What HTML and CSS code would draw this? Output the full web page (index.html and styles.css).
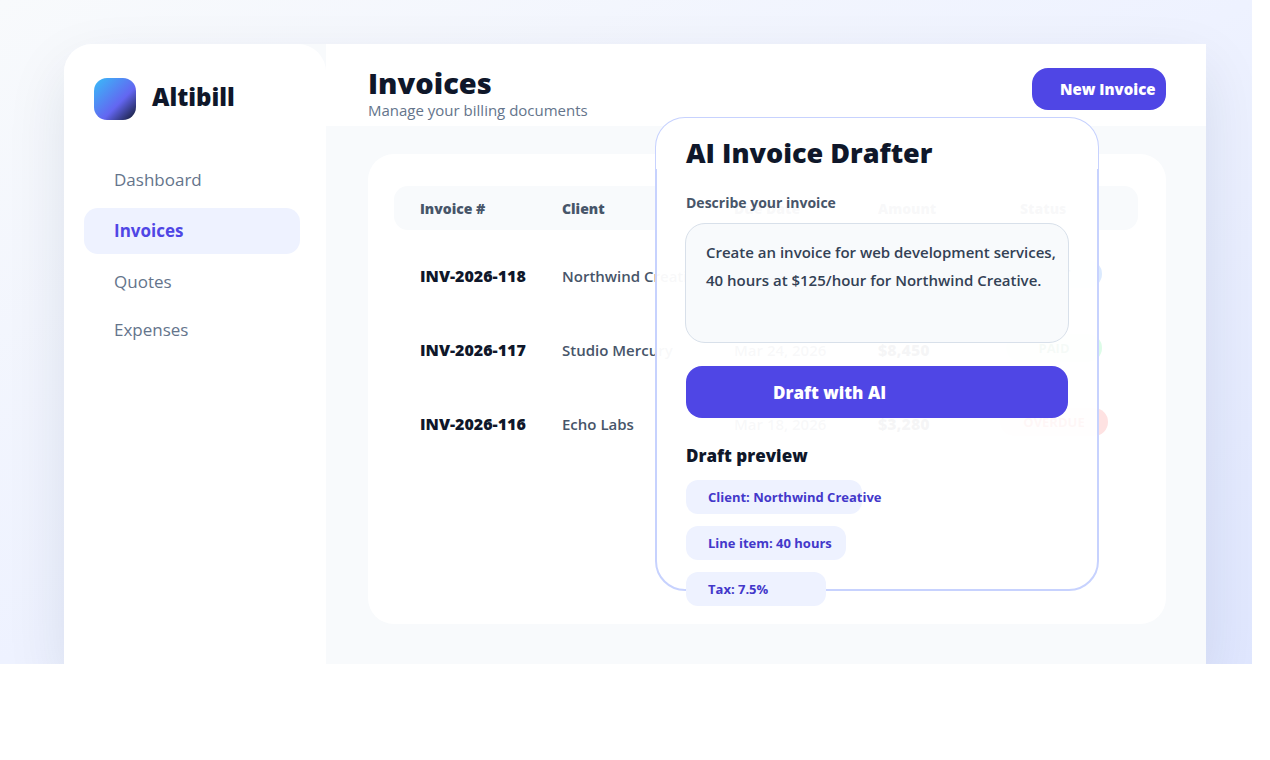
FILE: index.html
```html
<!DOCTYPE html>
<html lang="en">
<head>
    <meta charset="UTF-8">
    <meta name="viewport" content="width=device-width, initial-scale=1.0">
    <title>Altibill - Invoices</title>
    <link rel="stylesheet" href="styles.css">
</head>
<body>
    <div class="scene">
        <div class="app">
            <aside class="sidebar">
                <div class="brand">
                    <span class="brand-mark"></span>
                    <span class="brand-name">Altibill</span>
                </div>
                <nav class="nav">
                    <a class="nav-item" href="#dashboard">Dashboard</a>
                    <a class="nav-item active" href="#invoices">Invoices</a>
                    <a class="nav-item" href="#quotes">Quotes</a>
                    <a class="nav-item" href="#expenses">Expenses</a>
                </nav>
            </aside>

            <main class="main">
                <header class="topbar">
                    <div>
                        <h1 class="page-title">Invoices</h1>
                        <p class="page-subtitle">Manage your billing documents</p>
                    </div>
                    <button class="new-btn" type="button">New Invoice</button>
                </header>

                <section class="card">
                    <table class="invoices">
                        <thead>
                            <tr>
                                <th class="col-number">Invoice #</th>
                                <th class="col-client">Client</th>
                                <th class="col-date">Due Date</th>
                                <th class="col-amount">Amount</th>
                                <th>Status</th>
                            </tr>
                        </thead>
                        <tbody>
                            <tr>
                                <td class="number">INV-2026-118</td>
                                <td>Northwind Creative</td>
                                <td>Mar 28, 2026</td>
                                <td class="amount">$5,000</td>
                                <td class="status"><span class="pill sent">SENT</span></td>
                            </tr>
                            <tr>
                                <td class="number">INV-2026-117</td>
                                <td>Studio Mercury</td>
                                <td>Mar 24, 2026</td>
                                <td class="amount">$8,450</td>
                                <td class="status"><span class="pill paid">PAID</span></td>
                            </tr>
                            <tr>
                                <td class="number">INV-2026-116</td>
                                <td>Echo Labs</td>
                                <td>Mar 18, 2026</td>
                                <td class="amount">$3,280</td>
                                <td class="status"><span class="pill overdue">OVERDUE</span></td>
                            </tr>
                        </tbody>
                    </table>
                </section>
            </main>

            <!-- AI drafter floats over the invoice list -->
            <section class="drafter">
                <h2 class="drafter-title">AI Invoice Drafter</h2>
                <div class="drafter-body">
                    <label class="field-label" for="prompt">Describe your invoice</label>
                    <textarea class="prompt" id="prompt" spellcheck="false">Create an invoice for web development services,
40 hours at $125/hour for Northwind Creative.</textarea>
                    <button class="draft-btn" type="button">Draft with AI</button>
                    <h3 class="preview-title">Draft preview</h3>
                    <ul class="chips">
                        <li class="chip chip-client">Client: Northwind Creative</li>
                        <li class="chip chip-line">Line item: 40 hours</li>
                        <li class="chip chip-tax">Tax: 7.5%</li>
                    </ul>
                </div>
            </section>
        </div>
    </div>
</body>
</html>
```
FILE: styles.css
```css
* {
    margin: 0;
    padding: 0;
    box-sizing: border-box;
}

body {
    font-family: 'Open Sans', 'Noto Sans', sans-serif;
    background: #ffffff;
    color: #0f172a;
}

button,
textarea {
    font-family: inherit;
}

.scene {
    display: flex;
    height: calc(100vh - 96px);
    min-height: 620px;
    margin-right: 18px;
    padding: 44px 46px 0 64px;
    background: linear-gradient(to bottom right, #f8fafc 0%, #eef2ff 50%, #e0e7ff 100%);
    overflow: hidden;
}

.app {
    position: relative;
    display: flex;
    flex: 1;
    background: #f8fafc;
    border-top-left-radius: 28px;
    box-shadow: 0 24px 60px rgba(15, 35, 65, 0.1);
}

/* Sidebar */
.sidebar {
    flex: none;
    width: 262px;
    padding: 34px 26px 0 20px;
    background: #ffffff;
    border-radius: 28px 28px 0 0;
}

.brand {
    display: flex;
    align-items: flex-start;
    gap: 16px;
    padding-left: 10px;
    margin-bottom: 40px;
}

.brand-mark {
    width: 42px;
    height: 42px;
    border-radius: 13px;
    background: linear-gradient(135deg, #38bdf8 0%, #6366f1 60%, #0f172a 100%);
}

.brand-name {
    font-size: 24px;
    line-height: 38px;
    font-weight: 800;
}

.nav {
    display: flex;
    flex-direction: column;
    gap: 8px;
}

.nav-item {
    padding: 8px 30px;
    border-radius: 14px;
    font-size: 17px;
    line-height: 24px;
    font-weight: 500;
    color: #64748b;
    text-decoration: none;
}

.nav-item.active {
    padding: 11px 30px;
    background: #eef2ff;
    color: #4f46e5;
    font-weight: 700;
}

/* Main area */
.main {
    flex: 1;
    min-width: 0;
}

.topbar {
    display: flex;
    justify-content: space-between;
    align-items: flex-start;
    height: 82px;
    padding: 24px 40px 0 42px;
    background: #ffffff;
}

.page-title {
    font-size: 29px;
    line-height: 30px;
    font-weight: 800;
}

.page-subtitle {
    font-size: 15px;
    line-height: 24px;
    font-weight: 500;
    color: #64748b;
}

.new-btn {
    width: 134px;
    height: 42px;
    padding-left: 28px;
    border: none;
    border-radius: 16px;
    background: #4f46e5;
    color: #ffffff;
    font-size: 15px;
    font-weight: 800;
    text-align: left;
    white-space: nowrap;
    cursor: pointer;
}

.card {
    height: 470px;
    margin: 28px 40px 0 42px;
    padding: 32px 28px 0 26px;
    background: #ffffff;
    border-radius: 26px;
}

.invoices {
    width: 100%;
    table-layout: fixed;
    border-collapse: collapse;
    font-size: 15px;
    line-height: 22px;
    text-align: left;
}

.invoices th {
    height: 44px;
    padding: 1px 0 0 26px;
    background: #f8fafc;
    color: #475569;
    font-size: 14px;
    font-weight: 800;
}

.invoices th:first-child {
    border-radius: 14px 0 0 14px;
}

.invoices th:last-child {
    border-radius: 0 14px 14px 0;
}

.invoices td {
    padding: 35px 0 17px 26px;
    color: #475569;
    font-weight: 600;
    white-space: nowrap;
    vertical-align: top;
}

.col-number,
.col-amount {
    width: 142px;
}

.col-client {
    width: 172px;
}

.col-date {
    width: 144px;
}

.invoices .number,
.invoices .amount {
    color: #0f172a;
    font-size: 16px;
    font-weight: 800;
}

.invoices .status {
    padding: 30px 24px 0 0;
    text-align: center;
}

.pill {
    display: inline-block;
    width: 96px;
    border-radius: 14px;
    font-size: 13px;
    line-height: 28px;
    font-weight: 700;
}

.pill.sent {
    background: #dbeafe;
    color: #1d4ed8;
}

.pill.paid {
    background: #dcfce7;
    color: #15803d;
}

.pill.overdue {
    width: 108px;
    background: #fee2e2;
    color: #dc2626;
}

/* AI drafter */
.drafter {
    position: absolute;
    top: 73px;
    right: 107px;
    width: 444px;
    height: 474px;
    border: 2px solid #c7d2fe;
    border-radius: 30px;
    background: rgba(255, 255, 255, 0.96);
}

.drafter-title {
    height: 51px;
    margin: -1px -1px 0;
    padding: 17px 30px 0;
    border-radius: 29px 29px 0 0;
    background: #ffffff;
    font-size: 27px;
    line-height: 36px;
    font-weight: 800;
}

.drafter-body {
    padding: 23px 28px 0;
}

.field-label {
    display: block;
    margin: 0 1px 9px;
    font-size: 14px;
    line-height: 22px;
    font-weight: 700;
    color: #475569;
}

.prompt {
    display: block;
    width: 100%;
    height: 120px;
    padding: 14px 0 0 20px;
    border: 1px solid #d8e0ea;
    border-radius: 20px;
    background: #f8fafc;
    color: #334155;
    font-size: 15px;
    line-height: 28px;
    font-weight: 600;
    white-space: pre;
    overflow: hidden;
    resize: none;
    outline: none;
}

.draft-btn {
    display: block;
    width: 382px;
    height: 52px;
    margin: 23px 1px 0;
    padding-left: 87px;
    border: none;
    border-radius: 16px;
    background: #4f46e5;
    color: #ffffff;
    font-size: 17px;
    font-weight: 800;
    text-align: left;
    cursor: pointer;
}

.preview-title {
    margin: 26px 1px 0;
    font-size: 17px;
    line-height: 24px;
    font-weight: 800;
}

.chips {
    display: flex;
    flex-direction: column;
    gap: 12px;
    margin: 12px 1px 0;
    list-style: none;
}

.chip {
    height: 34px;
    padding-left: 22px;
    border-radius: 12px;
    background: #eef2ff;
    color: #4338ca;
    font-size: 13px;
    line-height: 34px;
    font-weight: 700;
    white-space: nowrap;
}

.chip-client {
    width: 176px;
}

.chip-line {
    width: 160px;
}

.chip-tax {
    width: 140px;
}
```
